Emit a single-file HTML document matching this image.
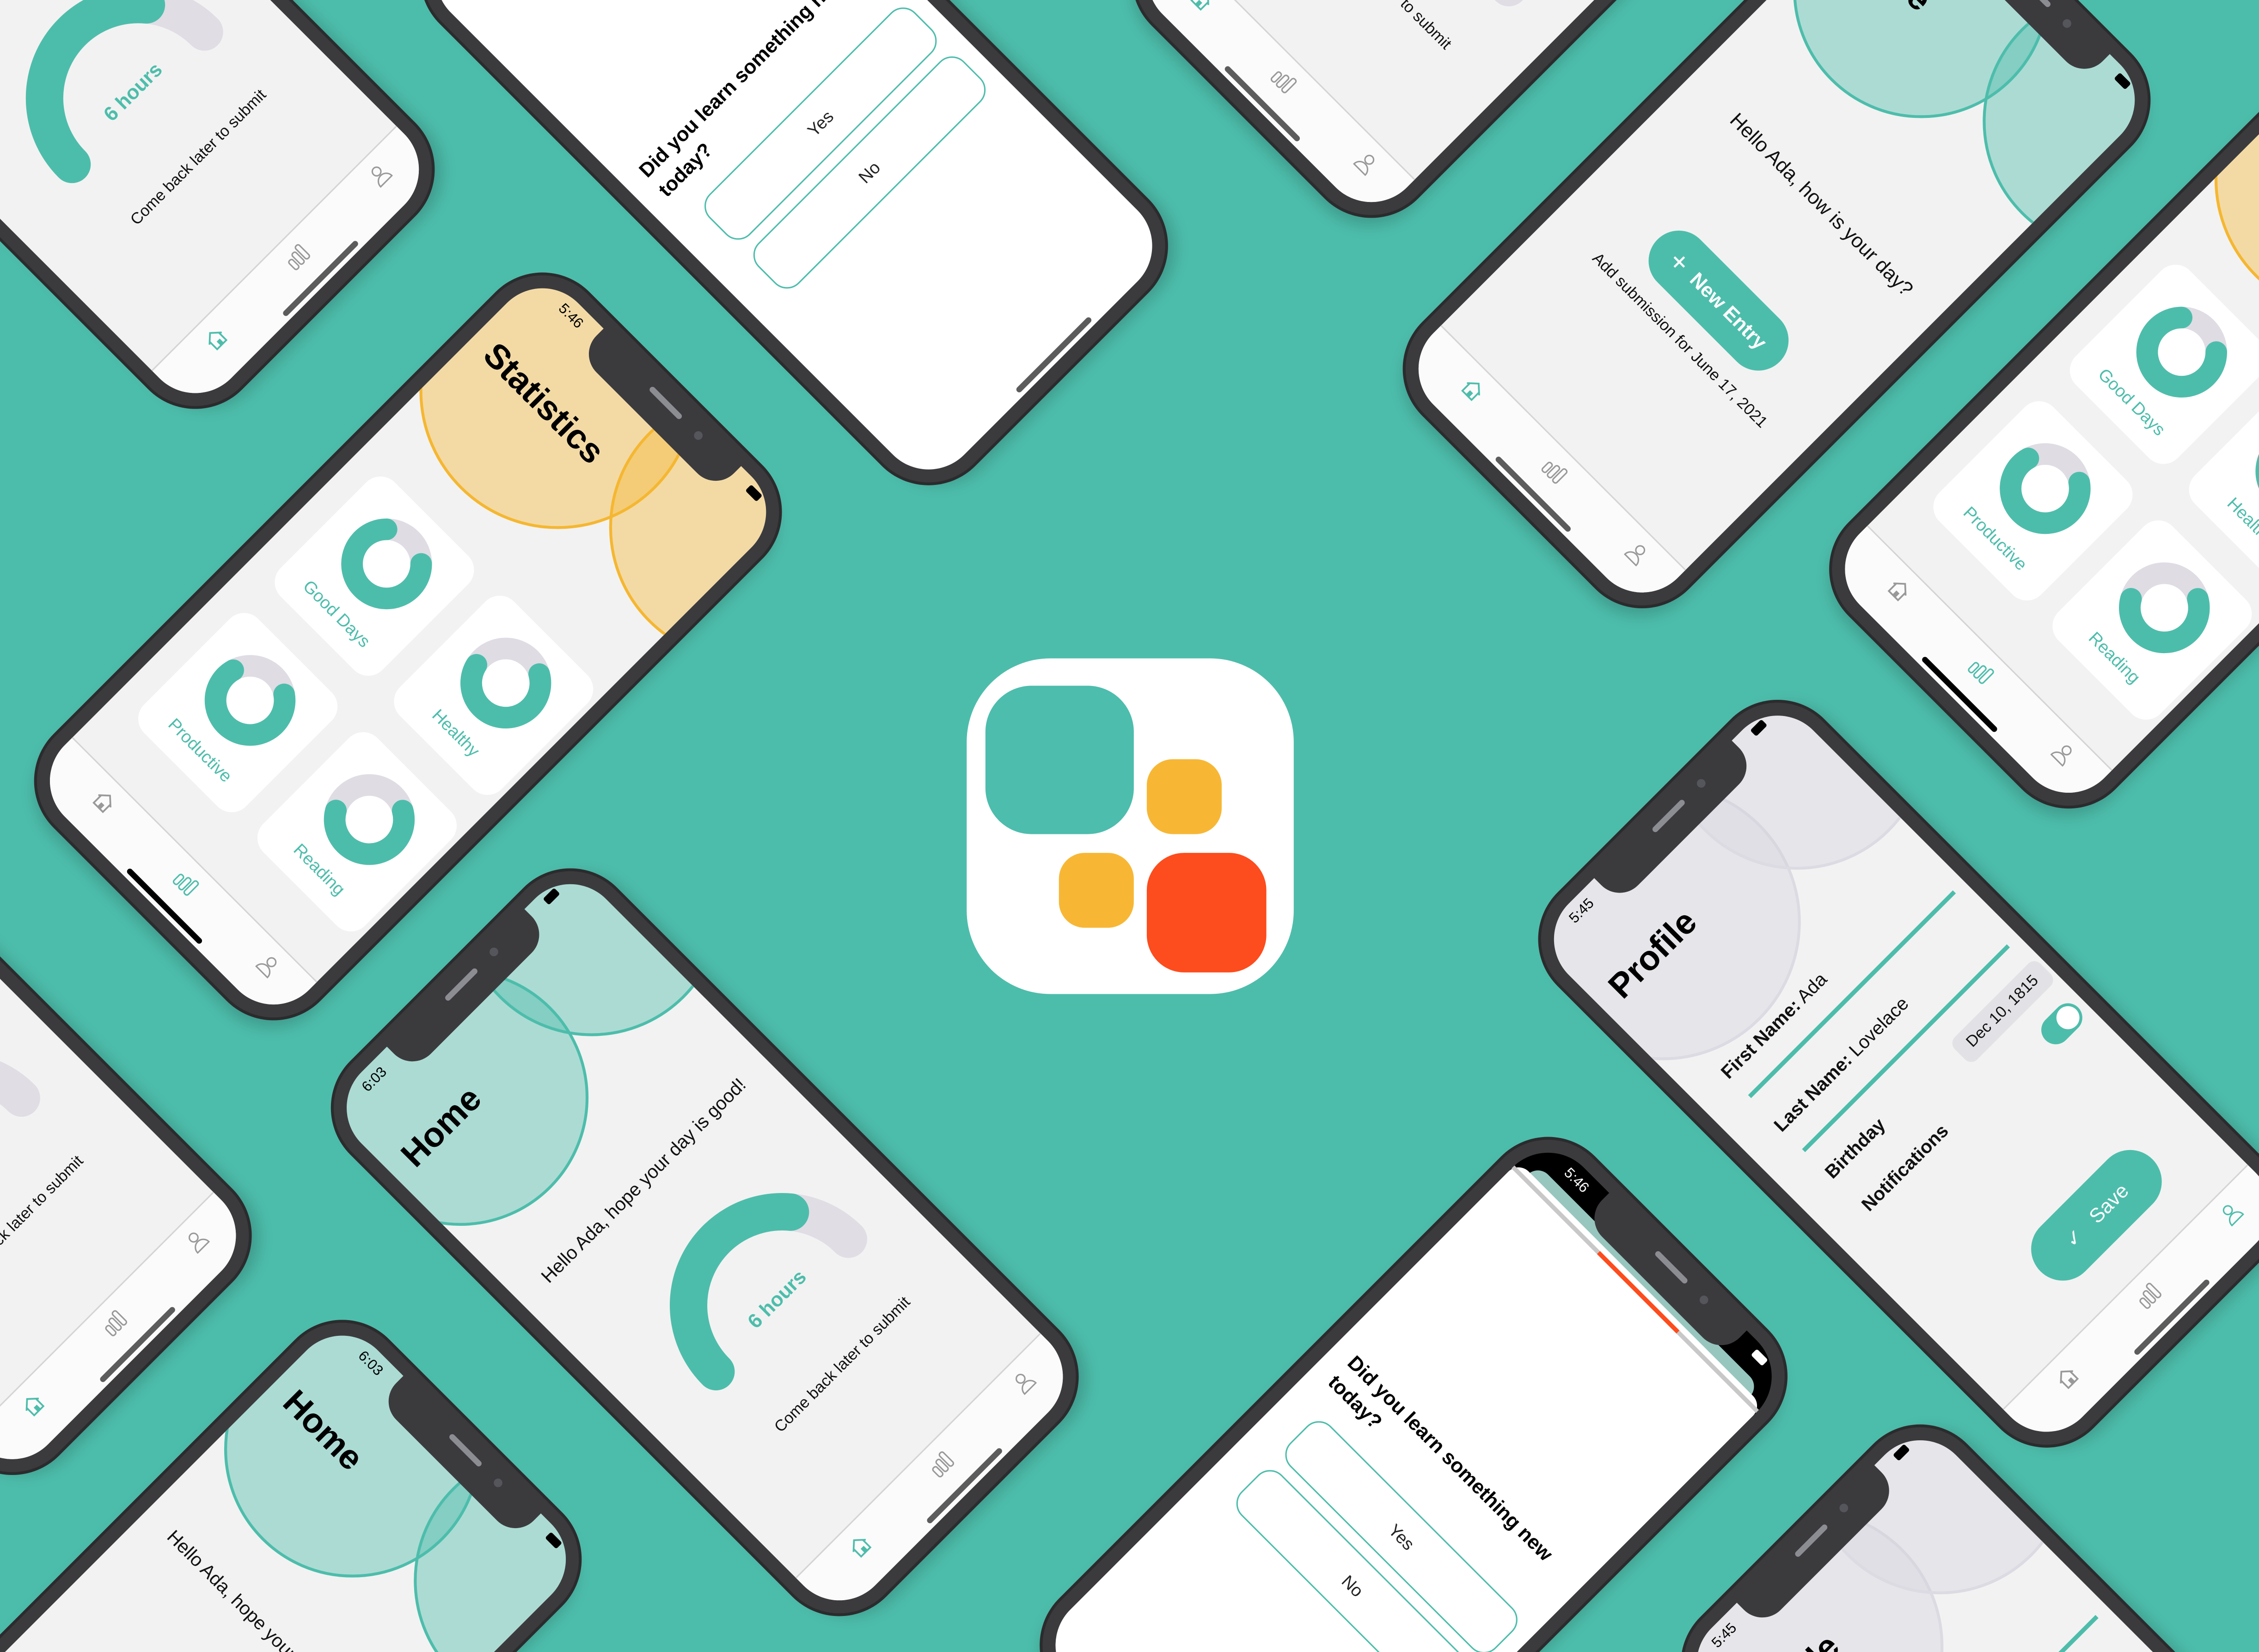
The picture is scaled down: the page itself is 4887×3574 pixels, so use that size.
<!DOCTYPE html>
<html><head><meta charset="utf-8">
<style>
html,body{margin:0;padding:0;width:4887px;height:3574px;overflow:hidden;}
body{background:#4dbdab;font-family:"Liberation Sans",sans-serif;position:relative;}
#w{position:absolute;left:0;top:0;width:1568px;height:1147px;transform:scale(3.1167);transform-origin:0 0;overflow:hidden;background:#4dbdab;}
.ph{position:absolute;width:258px;height:522px;border-radius:44px;background:#3b3b3e;box-shadow:0 0 0 2px #2b2b2d,4px 6px 10px rgba(0,0,0,.18);transform-origin:136.5px 261px;}
.r1{transform:rotate(-45deg);}
.r2{transform:rotate(45deg);}
.sc{position:absolute;left:9px;top:9px;width:240px;height:504px;border-radius:35px;overflow:hidden;background:#f2f2f2;}
.in{position:absolute;left:6px;top:-9px;width:243px;height:522px;}
.in>*{position:absolute;}
.sv{left:0;top:0;overflow:visible;}
.notch{position:absolute;left:69px;top:0;width:135px;height:34px;background:#3b3b3e;border-radius:0 0 18px 18px;}
.notch:before{content:"";position:absolute;left:52px;top:13px;width:30px;height:4px;border-radius:2px;background:#8c8c93;}
.notch:after{content:"";position:absolute;left:96px;top:12px;width:6px;height:6px;border-radius:50%;background:#55555c;}
.tm{left:22px;top:14px;font-size:10px;color:#000;}
.ttl{left:8px;top:62px;font-size:24px;font-weight:bold;color:#000;white-space:nowrap;}
.tb{left:-15px;top:470px;width:258px;height:52px;background:#fbfbfb;border-top:0.6px solid #d4d4d4;}
.ic{width:16px;height:16px;top:478px;}
.hi{left:86px;top:506px;width:72px;height:4px;border-radius:2px;background:#5c5c5c;}
.t13{font-size:13px;color:#111;white-space:nowrap;}
.ctr{left:0;width:243px;text-align:center;white-space:nowrap;}
.card{width:100px;height:112px;background:#fff;border-radius:14px;}
.lab{font-size:12px;color:#4dbdab;width:100px;text-align:center;}
.btn{border:1.5px solid #4dbdab;border-radius:12px;left:20px;width:200px;height:38px;text-align:center;line-height:38px;font-size:12px;color:#222;background:#fff;}
</style></head><body>
<div id="w">

<!-- APP ICON -->
<div style="position:absolute;left:671px;top:457px;width:227px;height:233px;background:#fff;border-radius:58px;"></div>
<div style="position:absolute;left:684px;top:476px;width:103px;height:103px;background:#4dbdad;border-radius:32px;"></div>
<div style="position:absolute;left:796px;top:527px;width:52px;height:52px;background:#f7b735;border-radius:18px;"></div>
<div style="position:absolute;left:735px;top:592px;width:52px;height:52px;background:#f7b735;border-radius:18px;"></div>
<div style="position:absolute;left:796px;top:592px;width:83px;height:83px;background:#fd4c1d;border-radius:26px;"></div>

<!-- PHONE 1 home -45 -->
<div class="ph r1" style="left:-89.5px;top:-242px;">
<div class="sc"><div class="in">
<svg class="sv" width="243" height="522"><circle cx="65" cy="70" r="88" fill="rgba(77,189,171,.42)" stroke="#4dbdab" stroke-width="2"/><circle cx="224" cy="40" r="90" fill="rgba(77,189,171,.42)" stroke="#4dbdab" stroke-width="2"/><path d="M56 330 A65 65 0 0 1 186 330" stroke="#e0dde5" stroke-width="26" fill="none" stroke-linecap="round"/><path d="M56 330 A65 65 0 0 1 170.8 288.2" stroke="#4dbdab" stroke-width="26" fill="none" stroke-linecap="round"/></svg>
<div class="tm">6:03</div><div class="ttl">Home</div>
<div class="t13" style="left:17px;top:193px;">Hello Ada, hope your day is good!</div>
<div class="ctr" style="top:316px;font-size:14px;font-weight:bold;color:#4dbdab;">6 hours</div>
<div class="ctr" style="top:383px;font-size:11px;color:#111;">Come back later to submit</div>
<div class="tb"></div>
<svg class="ic" style="left:33px" viewBox="0 0 16 16"><path d="M2 8L8 2.5L14 8M3.5 7V14H12.5V7" stroke="#4dbdab" stroke-width="1.2" fill="none"/><rect x="7" y="10" width="3" height="4" fill="#4dbdab"/></svg>
<svg class="ic" style="left:113px" viewBox="0 0 16 16"><g stroke="#999" stroke-width="1" fill="none"><rect x="1" y="6" width="3.5" height="8" rx="1.5"/><rect x="6.2" y="4" width="3.5" height="10" rx="1.5"/><rect x="11.4" y="2" width="3.5" height="12" rx="1.5"/></g></svg>
<svg class="ic" style="left:194px" viewBox="0 0 16 16"><g stroke="#999" stroke-width="1" fill="none"><circle cx="8" cy="5" r="3"/><path d="M2.5 14.5a5.5 5.5 0 0 1 11 0z"/></g></svg>
<div class="hi"></div>
</div></div><div class="notch"></div></div>

<!-- PHONE 10 home -45 -->
<div class="ph r1" style="left:-216px;top:497.5px;">
<div class="sc"><div class="in">
<svg class="sv" width="243" height="522"><circle cx="65" cy="70" r="88" fill="rgba(77,189,171,.42)" stroke="#4dbdab" stroke-width="2"/><circle cx="224" cy="40" r="90" fill="rgba(77,189,171,.42)" stroke="#4dbdab" stroke-width="2"/><path d="M56 330 A65 65 0 0 1 186 330" stroke="#e0dde5" stroke-width="26" fill="none" stroke-linecap="round"/><path d="M56 330 A65 65 0 0 1 170.8 288.2" stroke="#4dbdab" stroke-width="26" fill="none" stroke-linecap="round"/></svg>
<div class="tm">6:03</div><div class="ttl">Home</div>
<div class="t13" style="left:17px;top:193px;">Hello Ada, hope your day is good!</div>
<div class="ctr" style="top:316px;font-size:14px;font-weight:bold;color:#4dbdab;">6 hours</div>
<div class="ctr" style="top:383px;font-size:11px;color:#111;">Come back later to submit</div>
<div class="tb"></div>
<svg class="ic" style="left:33px" viewBox="0 0 16 16"><path d="M2 8L8 2.5L14 8M3.5 7V14H12.5V7" stroke="#4dbdab" stroke-width="1.2" fill="none"/><rect x="7" y="10" width="3" height="4" fill="#4dbdab"/></svg>
<svg class="ic" style="left:113px" viewBox="0 0 16 16"><g stroke="#999" stroke-width="1" fill="none"><rect x="1" y="6" width="3.5" height="8" rx="1.5"/><rect x="6.2" y="4" width="3.5" height="10" rx="1.5"/><rect x="11.4" y="2" width="3.5" height="12" rx="1.5"/></g></svg>
<svg class="ic" style="left:194px" viewBox="0 0 16 16"><g stroke="#999" stroke-width="1" fill="none"><circle cx="8" cy="5" r="3"/><path d="M2.5 14.5a5.5 5.5 0 0 1 11 0z"/></g></svg>
<div class="hi"></div>
</div></div><div class="notch"></div></div>

<!-- MAIN HOME -45 -->
<div class="ph r1" style="left:357.5px;top:596px;">
<div class="sc"><div class="in">
<svg class="sv" width="243" height="522"><circle cx="65" cy="70" r="88" fill="rgba(77,189,171,.42)" stroke="#4dbdab" stroke-width="2"/><circle cx="224" cy="40" r="90" fill="rgba(77,189,171,.42)" stroke="#4dbdab" stroke-width="2"/><path d="M56 330 A65 65 0 0 1 186 330" stroke="#e0dde5" stroke-width="26" fill="none" stroke-linecap="round"/><path d="M56 330 A65 65 0 0 1 170.8 288.2" stroke="#4dbdab" stroke-width="26" fill="none" stroke-linecap="round"/><rect x="203" y="13" width="11" height="6" rx="1.5" fill="#000"/></svg>
<div class="tm">6:03</div><div class="ttl">Home</div>
<div class="t13" style="left:17px;top:193px;">Hello Ada, hope your day is good!</div>
<div class="ctr" style="top:316px;font-size:14px;font-weight:bold;color:#4dbdab;">6 hours</div>
<div class="ctr" style="top:383px;font-size:11px;color:#111;">Come back later to submit</div>
<div class="tb"></div>
<svg class="ic" style="left:33px" viewBox="0 0 16 16"><path d="M2 8L8 2.5L14 8M3.5 7V14H12.5V7" stroke="#4dbdab" stroke-width="1.2" fill="none"/><rect x="7" y="10" width="3" height="4" fill="#4dbdab"/></svg>
<svg class="ic" style="left:113px" viewBox="0 0 16 16"><g stroke="#999" stroke-width="1" fill="none"><rect x="1" y="6" width="3.5" height="8" rx="1.5"/><rect x="6.2" y="4" width="3.5" height="10" rx="1.5"/><rect x="11.4" y="2" width="3.5" height="12" rx="1.5"/></g></svg>
<svg class="ic" style="left:194px" viewBox="0 0 16 16"><g stroke="#999" stroke-width="1" fill="none"><circle cx="8" cy="5" r="3"/><path d="M2.5 14.5a5.5 5.5 0 0 1 11 0z"/></g></svg>
<div class="hi"></div>
</div></div><div class="notch"></div></div>

<!-- PHONE 4 home +45 -->
<div class="ph r2" style="left:914px;top:-363.6px;">
<div class="sc"><div class="in">
<svg class="sv" width="243" height="522"><circle cx="65" cy="70" r="88" fill="rgba(77,189,171,.42)" stroke="#4dbdab" stroke-width="2"/><circle cx="224" cy="40" r="90" fill="rgba(77,189,171,.42)" stroke="#4dbdab" stroke-width="2"/><path d="M56 330 A65 65 0 0 1 186 330" stroke="#e0dde5" stroke-width="26" fill="none" stroke-linecap="round"/><path d="M56 330 A65 65 0 0 1 170.8 288.2" stroke="#4dbdab" stroke-width="26" fill="none" stroke-linecap="round"/></svg>
<div class="tm">6:03</div><div class="ttl">Home</div>
<div class="t13" style="left:17px;top:193px;">Hello Ada, hope your day is good!</div>
<div class="ctr" style="top:316px;font-size:14px;font-weight:bold;color:#4dbdab;">6 hours</div>
<div class="ctr" style="top:383px;font-size:11px;color:#111;">Come back later to submit</div>
<div class="tb"></div>
<svg class="ic" style="left:33px" viewBox="0 0 16 16"><path d="M2 8L8 2.5L14 8M3.5 7V14H12.5V7" stroke="#4dbdab" stroke-width="1.2" fill="none"/><rect x="7" y="10" width="3" height="4" fill="#4dbdab"/></svg>
<svg class="ic" style="left:113px" viewBox="0 0 16 16"><g stroke="#999" stroke-width="1" fill="none"><rect x="1" y="6" width="3.5" height="8" rx="1.5"/><rect x="6.2" y="4" width="3.5" height="10" rx="1.5"/><rect x="11.4" y="2" width="3.5" height="12" rx="1.5"/></g></svg>
<svg class="ic" style="left:194px" viewBox="0 0 16 16"><g stroke="#999" stroke-width="1" fill="none"><circle cx="8" cy="5" r="3"/><path d="M2.5 14.5a5.5 5.5 0 0 1 11 0z"/></g></svg>
<div class="hi"></div>
</div></div><div class="notch"></div></div>

<!-- PHONE 9 home +45 -->
<div class="ph r2" style="left:12.5px;top:920px;">
<div class="sc"><div class="in">
<svg class="sv" width="243" height="522"><circle cx="65" cy="70" r="88" fill="rgba(77,189,171,.42)" stroke="#4dbdab" stroke-width="2"/><circle cx="224" cy="40" r="90" fill="rgba(77,189,171,.42)" stroke="#4dbdab" stroke-width="2"/><path d="M56 330 A65 65 0 0 1 186 330" stroke="#e0dde5" stroke-width="26" fill="none" stroke-linecap="round"/><path d="M56 330 A65 65 0 0 1 170.8 288.2" stroke="#4dbdab" stroke-width="26" fill="none" stroke-linecap="round"/><rect x="203" y="13" width="11" height="6" rx="1.5" fill="#000"/></svg>
<div class="tm">6:03</div><div class="ttl">Home</div>
<div class="t13" style="left:17px;top:193px;">Hello Ada, hope your day is good!</div>
<div class="ctr" style="top:316px;font-size:14px;font-weight:bold;color:#4dbdab;">6 hours</div>
<div class="ctr" style="top:383px;font-size:11px;color:#111;">Come back later to submit</div>
<div class="tb"></div>
<div class="hi"></div>
</div></div><div class="notch"></div></div>

<!-- STATS +45 -->
<div class="ph r2" style="left:152px;top:193.4px;">
<div class="sc"><div class="in">
<svg class="sv" width="243" height="522"><circle cx="62" cy="62" r="95" fill="rgba(245,183,49,.4)" stroke="#f5b731" stroke-width="2"/><circle cx="220" cy="38" r="92" fill="rgba(245,183,49,.4)" stroke="#f5b731" stroke-width="2"/><rect x="203" y="13" width="11" height="6" rx="1.5" fill="#000"/></svg>
<div class="tm">5:46</div><div class="ttl">Statistics</div>
<div class="card" style="left:13px;top:187px;"></div><div class="card" style="left:130px;top:187px;"></div>
<div class="card" style="left:13px;top:321px;"></div><div class="card" style="left:130px;top:321px;"></div>
<svg class="sv" width="243" height="522"><g fill="none" stroke-width="15">
<circle cx="63" cy="231" r="24" stroke="#dfdce4"/><circle cx="63" cy="231" r="24" stroke="#4dbdab" stroke-dasharray="113 200" stroke-linecap="round" transform="rotate(-45 63 231)"/>
<circle cx="180" cy="231" r="24" stroke="#dfdce4"/><circle cx="180" cy="231" r="24" stroke="#4dbdab" stroke-dasharray="95 200" stroke-linecap="round" transform="rotate(-60 180 231)"/>
<circle cx="63" cy="365" r="24" stroke="#dfdce4"/><circle cx="63" cy="365" r="24" stroke="#4dbdab" stroke-dasharray="105 200" stroke-linecap="round" transform="rotate(-55 63 365)"/>
<circle cx="180" cy="365" r="24" stroke="#dfdce4"/><circle cx="180" cy="365" r="24" stroke="#4dbdab" stroke-dasharray="88 200" stroke-linecap="round" transform="rotate(-60 180 365)"/>
</g></svg>
<div class="lab" style="left:13px;top:273px;">Good Days</div><div class="lab" style="left:130px;top:273px;">Healthy</div>
<div class="lab" style="left:13px;top:407px;">Productive</div><div class="lab" style="left:130px;top:407px;">Reading</div>
<div class="tb"></div>
<svg class="ic" style="left:33px" viewBox="0 0 16 16"><path d="M2 8L8 2.5L14 8M3.5 7V14H12.5V7" stroke="#999" stroke-width="1.2" fill="none"/><rect x="7" y="10" width="3" height="4" fill="#999"/></svg>
<svg class="ic" style="left:113px" viewBox="0 0 16 16"><g stroke="#4dbdab" stroke-width="1" fill="none"><rect x="1" y="6" width="3.5" height="8" rx="1.5"/><rect x="6.2" y="4" width="3.5" height="10" rx="1.5"/><rect x="11.4" y="2" width="3.5" height="12" rx="1.5"/></g></svg>
<svg class="ic" style="left:194px" viewBox="0 0 16 16"><g stroke="#999" stroke-width="1" fill="none"><circle cx="8" cy="5" r="3"/><path d="M2.5 14.5a5.5 5.5 0 0 1 11 0z"/></g></svg>
<div class="hi" style="background:#000"></div>
</div></div><div class="notch"></div></div>

<!-- STATS right +45 -->
<div class="ph r2" style="left:1397.5px;top:46px;">
<div class="sc"><div class="in">
<svg class="sv" width="243" height="522"><circle cx="62" cy="62" r="95" fill="rgba(245,183,49,.4)" stroke="#f5b731" stroke-width="2"/><circle cx="220" cy="38" r="92" fill="rgba(245,183,49,.4)" stroke="#f5b731" stroke-width="2"/></svg>
<div class="tm">5:46</div><div class="ttl">Statistics</div>
<div class="card" style="left:13px;top:187px;"></div><div class="card" style="left:130px;top:187px;"></div>
<div class="card" style="left:13px;top:321px;"></div><div class="card" style="left:130px;top:321px;"></div>
<svg class="sv" width="243" height="522"><g fill="none" stroke-width="15">
<circle cx="63" cy="231" r="24" stroke="#dfdce4"/><circle cx="63" cy="231" r="24" stroke="#4dbdab" stroke-dasharray="113 200" stroke-linecap="round" transform="rotate(-45 63 231)"/>
<circle cx="180" cy="231" r="24" stroke="#dfdce4"/><circle cx="180" cy="231" r="24" stroke="#4dbdab" stroke-dasharray="95 200" stroke-linecap="round" transform="rotate(-60 180 231)"/>
<circle cx="63" cy="365" r="24" stroke="#dfdce4"/><circle cx="63" cy="365" r="24" stroke="#4dbdab" stroke-dasharray="105 200" stroke-linecap="round" transform="rotate(-55 63 365)"/>
<circle cx="180" cy="365" r="24" stroke="#dfdce4"/><circle cx="180" cy="365" r="24" stroke="#4dbdab" stroke-dasharray="88 200" stroke-linecap="round" transform="rotate(-60 180 365)"/>
</g></svg>
<div class="lab" style="left:13px;top:273px;">Good Days</div><div class="lab" style="left:130px;top:273px;">Healthy</div>
<div class="lab" style="left:13px;top:407px;">Productive</div><div class="lab" style="left:130px;top:407px;">Reading</div>
<div class="tb"></div>
<svg class="ic" style="left:33px" viewBox="0 0 16 16"><path d="M2 8L8 2.5L14 8M3.5 7V14H12.5V7" stroke="#999" stroke-width="1.2" fill="none"/><rect x="7" y="10" width="3" height="4" fill="#999"/></svg>
<svg class="ic" style="left:113px" viewBox="0 0 16 16"><g stroke="#4dbdab" stroke-width="1" fill="none"><rect x="1" y="6" width="3.5" height="8" rx="1.5"/><rect x="6.2" y="4" width="3.5" height="10" rx="1.5"/><rect x="11.4" y="2" width="3.5" height="12" rx="1.5"/></g></svg>
<svg class="ic" style="left:194px" viewBox="0 0 16 16"><g stroke="#999" stroke-width="1" fill="none"><circle cx="8" cy="5" r="3"/><path d="M2.5 14.5a5.5 5.5 0 0 1 11 0z"/></g></svg>
<div class="hi" style="background:#000"></div>
</div></div><div class="notch"></div></div>

<!-- QUESTION top -45 -->
<div class="ph r1" style="left:419.5px;top:-189px;">
<div class="sc" style="background:#fff"><div class="in">
<div style="left:9px;top:208px;width:225px;font-size:14px;font-weight:bold;line-height:19px;color:#000;">Did you learn something new today?</div>
<div class="btn" style="top:260px;">Yes</div>
<div class="btn" style="top:308px;">No</div>
<div class="hi"></div>
</div></div><div class="notch"></div></div>

<!-- QUESTION modal +45 -->
<div class="ph r2" style="left:849.5px;top:793px;">
<div class="sc" style="background:#000"><div class="in">
<div class="tm" style="color:#fff">5:46</div>
<div style="left:5px;top:30px;width:218px;height:40px;background:#97c6bf;border-radius:10px;"></div>
<div style="left:-6px;top:38px;width:240px;height:490px;background:#fff;border-radius:10px 10px 0 0;"></div>
<div style="left:-6px;top:42px;width:240px;height:3px;background:#c8c8c8;"></div>
<div style="left:78px;top:42px;width:78px;height:3px;background:#fd4c1d;"></div>
<svg class="sv" width="243" height="522"><rect x="203" y="13" width="11" height="6" rx="1.5" fill="#fff"/></svg>
<div style="left:9px;top:208px;width:225px;font-size:14px;font-weight:bold;line-height:19px;color:#000;">Did you learn something new today?</div>
<div class="btn" style="top:260px;">Yes</div>
<div class="btn" style="top:308px;">No</div>
<div class="hi"></div>
</div></div><div class="notch"></div></div>

<!-- NEW ENTRY +45 -->
<div class="ph r2" style="left:1101.5px;top:-93.5px;">
<div class="sc"><div class="in">
<svg class="sv" width="243" height="522"><circle cx="65" cy="70" r="88" fill="rgba(77,189,171,.42)" stroke="#4dbdab" stroke-width="2"/><circle cx="224" cy="40" r="90" fill="rgba(77,189,171,.42)" stroke="#4dbdab" stroke-width="2"/><rect x="203" y="13" width="11" height="6" rx="1.5" fill="#000"/></svg>
<div class="tm">6:03</div><div class="ttl">Home</div>
<div style="left:35px;top:216px;font-size:14px;color:#111;white-space:nowrap;">Hello Ada, how is your day?</div>
<div style="left:58px;top:301px;width:120px;height:42px;border-radius:21px;background:#4dbdab;color:#fff;font-size:14px;font-weight:bold;line-height:42px;text-align:center;white-space:nowrap;"><span style="font-weight:normal;font-size:20px;vertical-align:-2px;margin-right:8px;">+</span>New Entry</div>
<div class="ctr" style="left:-3px;top:355px;font-size:11px;color:#111;">Add submission for June 17, 2021</div>
<div class="tb"></div>
<svg class="ic" style="left:33px" viewBox="0 0 16 16"><path d="M2 8L8 2.5L14 8M3.5 7V14H12.5V7" stroke="#4dbdab" stroke-width="1.2" fill="none"/><rect x="7" y="10" width="3" height="4" fill="#4dbdab"/></svg>
<svg class="ic" style="left:113px" viewBox="0 0 16 16"><g stroke="#999" stroke-width="1" fill="none"><rect x="1" y="6" width="3.5" height="8" rx="1.5"/><rect x="6.2" y="4" width="3.5" height="10" rx="1.5"/><rect x="11.4" y="2" width="3.5" height="12" rx="1.5"/></g></svg>
<svg class="ic" style="left:194px" viewBox="0 0 16 16"><g stroke="#999" stroke-width="1" fill="none"><circle cx="8" cy="5" r="3"/><path d="M2.5 14.5a5.5 5.5 0 0 1 11 0z"/></g></svg>
<div class="hi"></div>
</div></div><div class="notch"></div></div>

<!-- PROFILE -45 -->
<div class="ph r1" style="left:1195.5px;top:479px;">
<div class="sc"><div class="in">
<svg class="sv" width="243" height="522"><circle cx="66" cy="64" r="95" fill="rgba(210,208,220,.35)" stroke="#dcdae2" stroke-width="2"/><circle cx="222" cy="40" r="90" fill="rgba(210,208,220,.35)" stroke="#dcdae2" stroke-width="2"/><rect x="203" y="13" width="11" height="6" rx="1.5" fill="#000"/></svg>
<div class="tm">5:45</div><div class="ttl">Profile</div>
<div class="t13" style="left:21px;top:162px;"><b>First Name:</b> Ada</div>
<div style="left:23px;top:191px;width:201px;height:3px;background:#4dbdab;"></div>
<div class="t13" style="left:21px;top:214px;"><b>Last Name:</b> Lovelace</div>
<div style="left:23px;top:244px;width:201px;height:3px;background:#4dbdab;"></div>
<div class="t13" style="left:23px;top:262px;font-weight:bold;">Birthday</div>
<div style="left:147px;top:264px;width:84px;height:22px;border-radius:6px;background:#e2e2e6;font-size:11px;line-height:22px;text-align:center;color:#111;">Dec 10, 1815</div>
<div class="t13" style="left:25px;top:296px;font-weight:bold;">Notifications</div>
<div style="left:196px;top:300px;width:32px;height:20px;border-radius:10px;background:#4dbdab;"></div>
<div style="left:210px;top:302px;width:16px;height:16px;border-radius:50%;background:#fff;"></div>
<div style="left:80px;top:399px;width:110px;height:44px;border-radius:22px;background:#4dbdab;color:#fff;font-size:14px;line-height:44px;text-align:center;white-space:nowrap;"><span style="margin-right:12px;">✓</span>Save</div>
<div class="tb"></div>
<svg class="ic" style="left:33px" viewBox="0 0 16 16"><path d="M2 8L8 2.5L14 8M3.5 7V14H12.5V7" stroke="#999" stroke-width="1.2" fill="none"/><rect x="7" y="10" width="3" height="4" fill="#999"/></svg>
<svg class="ic" style="left:113px" viewBox="0 0 16 16"><g stroke="#999" stroke-width="1" fill="none"><rect x="1" y="6" width="3.5" height="8" rx="1.5"/><rect x="6.2" y="4" width="3.5" height="10" rx="1.5"/><rect x="11.4" y="2" width="3.5" height="12" rx="1.5"/></g></svg>
<svg class="ic" style="left:194px" viewBox="0 0 16 16"><g stroke="#4dbdab" stroke-width="1" fill="none"><circle cx="8" cy="5" r="3"/><path d="M2.5 14.5a5.5 5.5 0 0 1 11 0z"/></g></svg>
<div class="hi"></div>
</div></div><div class="notch"></div></div>

<!-- PROFILE bottom-right -45 -->
<div class="ph r1" style="left:1294.5px;top:981.5px;">
<div class="sc"><div class="in">
<svg class="sv" width="243" height="522"><circle cx="66" cy="64" r="95" fill="rgba(210,208,220,.35)" stroke="#dcdae2" stroke-width="2"/><circle cx="222" cy="40" r="90" fill="rgba(210,208,220,.35)" stroke="#dcdae2" stroke-width="2"/><rect x="203" y="13" width="11" height="6" rx="1.5" fill="#000"/></svg>
<div class="tm">5:45</div><div class="ttl">Profile</div>
<div class="t13" style="left:21px;top:162px;"><b>First Name:</b> Ada</div>
<div style="left:23px;top:191px;width:201px;height:3px;background:#4dbdab;"></div>
<div class="t13" style="left:21px;top:214px;"><b>Last Name:</b> Lovelace</div>
<div style="left:23px;top:244px;width:201px;height:3px;background:#4dbdab;"></div>
<div class="tb"></div>
<div class="hi"></div>
</div></div><div class="notch"></div></div>

</div>
</body></html>
